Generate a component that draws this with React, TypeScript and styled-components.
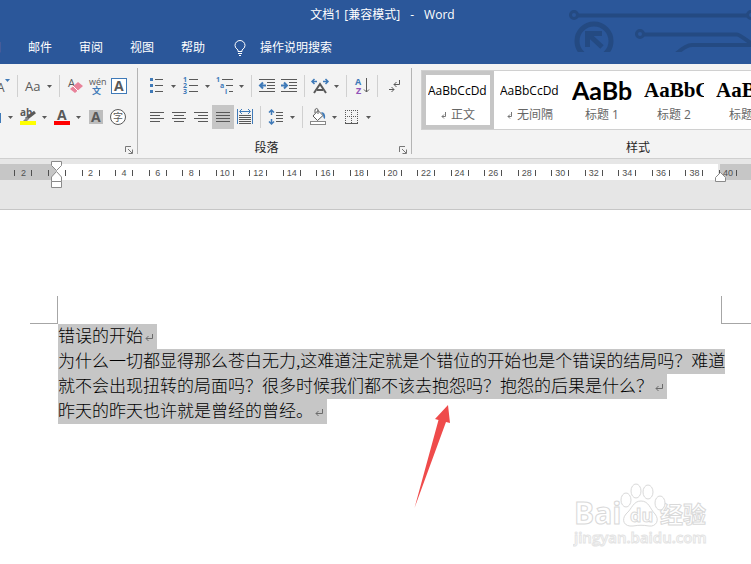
import React from "react";
import styled, { createGlobalStyle } from "styled-components";

const BLUE = "#2b579a";
const INK = "#595959";
const ACCENT = "#3f7ab8";

const Global = createGlobalStyle`
  * { box-sizing: border-box; }
  html, body, #root { height: 100%; }
  body {
    margin: 0;
    overflow: hidden;
    font: 12px/16px "Open Sans", "Noto Sans CJK SC", sans-serif;
    color: #262626;
  }
  button { font: inherit; color: inherit; background: none; border: 0; padding: 0; margin: 0; }
  svg { display: block; flex: none; }
`;

const Window = styled.div`
  display: flex;
  flex-direction: column;
  min-height: 100%;
  overflow: hidden;
  background: #fff;
`;

const Header = styled.header`
  position: relative;
  overflow: hidden;
  background: ${BLUE};
  color: #fff;
  height: 64px;
`;

const Circuit = styled.svg`
  position: absolute;
  top: 0;
  right: 0;
`;

const TitleBar = styled.div`
  position: relative;
  display: flex;
  justify-content: center;
  gap: 10px;
  height: 30px;
  padding-left: 14px;
  line-height: 30px;
`;

const Tabs = styled.nav`
  position: relative;
  display: flex;
  align-items: center;
  gap: 27px;
  height: 36px;
  margin-left: -23px;
`;

const Tab = styled.button`
  line-height: 36px;
  white-space: nowrap;
`;

const SearchTab = styled(Tab)`
  display: flex;
  align-items: center;
  gap: 12px;
`;

const Ribbon = styled.div`
  display: flex;
  flex: none;
  height: 95px;
  overflow: hidden;
  background: #f3f3f3;
  border-bottom: 1px solid #cfcfcf;
`;

const Group = styled.section<{ $w: number }>`
  display: flex;
  flex: none;
  flex-direction: column;
  width: ${(p) => p.$w}px;
`;

const GroupLine = styled.div`
  flex: none;
  width: 1px;
  margin: 4px 0;
  background: #b4b4b4;
`;

const Rows = styled.div<{ $indent?: number }>`
  display: flex;
  flex-direction: column;
  gap: 7px;
  height: 74px;
  padding: 10px 0 0 ${(p) => p.$indent ?? 0}px;
`;

const Row = styled.div`
  display: flex;
  height: 24px;
`;

const Tool = styled.button<{ $w?: number; $on?: boolean }>`
  display: flex;
  flex: none;
  justify-content: flex-start;
  width: ${(p) => p.$w ?? 22}px;
  height: 24px;
  background: ${(p) => (p.$on ? "#c6c6c6" : "transparent")};
`;

const CaretButton = styled.button`
  display: flex;
  flex: none;
  align-items: center;
  width: 12px;
  height: 24px;
  padding-left: 3px;
`;

const Split = styled.div`
  flex: none;
  width: 1px;
  height: 22px;
  margin: 1px 4px 0 3px;
  background: #d0d0d0;
`;

const GroupFoot = styled.div`
  display: flex;
  align-items: center;
  height: 20px;
`;

const GroupName = styled.span`
  flex: 1;
  text-align: center;
`;

const Launcher = styled.button`
  display: flex;
  align-items: center;
  justify-content: center;
  width: 16px;
  height: 16px;
  padding-top: 4px;
`;

const Gallery = styled.div`
  display: flex;
  height: 60px;
  margin: 6px 0 8px 9px;
  border: 1px solid #d0d0d0;
  background: #fff;
`;

const StyleCard = styled.button<{ $on?: boolean }>`
  display: flex;
  flex: none;
  flex-direction: column;
  width: 72px;
  padding: ${(p) => (p.$on ? "0 2px" : "4px 6px")};
  border: ${(p) => (p.$on ? "4px solid #c6c6c6" : "0")};
`;

const Sample = styled.span<{ $font: string; $size: number; $bold?: boolean }>`
  width: 60px;
  height: 31px;
  overflow: hidden;
  color: #000;
  font-family: ${(p) => p.$font}, sans-serif;
  font-size: ${(p) => p.$size}px;
  font-weight: ${(p) => (p.$bold ? 700 : 400)};
  line-height: 31px;
  text-align: left;
  white-space: nowrap;
`;

const StyleName = styled.span`
  display: flex;
  align-items: center;
  justify-content: center;
  gap: 4px;
  width: 60px;
  height: 18px;
  color: #666;
  white-space: nowrap;
`;

const RulerBar = styled.div`
  flex: none;
  height: 51px;
  overflow: hidden;
  background: #e6e6e6;
  border-bottom: 1px solid #c6c6c6;
`;

const Paper = styled.main`
  position: relative;
  flex: 1;
  padding-top: 86px;
`;

const Corners = styled.div`
  display: flex;
  justify-content: space-between;
  padding-left: 30px;
`;

const Corner = styled.div<{ $side: "left" | "right" }>`
  width: ${(p) => (p.$side === "left" ? 28 : 30)}px;
  height: 28px;
  border-bottom: 1px solid #a6a6a6;
  border-left: ${(p) => (p.$side === "right" ? "1px solid #a6a6a6" : "0")};
  border-right: ${(p) => (p.$side === "left" ? "1px solid #a6a6a6" : "0")};
`;

const Body = styled.article`
  padding-left: 58px;
  color: #000;
  font: 300 17px/22px "Noto Sans CJK SC", sans-serif;
`;

const Para = styled.p`
  margin: 0;
`;

const Line = styled.span`
  display: flex;
  align-items: center;
  width: fit-content;
  height: 25px;
  padding-bottom: 3px;
  background: #c6c6c6;
  white-space: nowrap;
`;

const Pointer = styled.svg`
  position: absolute;
  left: 410px;
  top: 191px;
`;

const Watermark = styled.svg`
  position: absolute;
  right: 36px;
  bottom: 10px;
`;

const Caret = ({ label }: { label: string }) => (
  <CaretButton aria-label={label}>
    <svg width="5" height="3"><path d="M0 0H5L2.5 3Z" fill={INK} /></svg>
  </CaretButton>
);

type IconProps = { label: string; w?: number; on?: boolean; children: React.ReactNode };

const Icon = ({ label, w, on, children }: IconProps) => (
  <Tool aria-label={label} aria-pressed={on} $w={w} $on={on}>
    <svg width="22" height="24" fill="none" stroke={INK} overflow="visible">{children}</svg>
  </Tool>
);

type GlyphProps = { x: number; y: number; size: number; fill?: string; bold?: boolean; children: string };

const Glyph = ({ x, y, size, fill = INK, bold, children }: GlyphProps) => (
  <text x={x} y={y} fontSize={size} fill={fill} stroke="none" fontWeight={bold ? 700 : 400}>{children}</text>
);

const LaunchButton = ({ label }: { label: string }) => (
  <Launcher aria-label={label}>
    <svg width="8" height="8" fill="none" stroke="#777">
      <path d="M.5 6V.5H6M3 3L7 7M7.5 3.5V7.5H3.5" />
    </svg>
  </Launcher>
);

const ReturnMark = () => (
  <svg width="14" height="22" fill="none" stroke="#6b6b6b">
    <path d="M9.5 10V14.5H3M5.5 12L3 14.5L5.5 17" />
  </svg>
);

const SmallMark = () => (
  <svg width="6" height="8" fill="none" stroke="#777">
    <path d="M4.5 1V5.5H1M3 3.5L1 5.5L3 7.5" />
  </svg>
);

const SAMPLES = [
  { name: "正文", text: "AaBbCcDd", font: '"Open Sans"', size: 12, mark: true },
  { name: "无间隔", text: "AaBbCcDd", font: '"Open Sans"', size: 12, mark: true },
  { name: "标题 1", text: "AaBb", font: "Lato", size: 25, bold: true },
  { name: "标题 2", text: "AaBbC", font: '"Liberation Serif"', size: 21, bold: true },
  { name: "标题 3", text: "AaBbC", font: '"Liberation Serif"', size: 21, bold: true },
];

const ORIGIN = 57;
const STEP = 671 / 20;
const MARKS = Array.from({ length: 22 }, (_, i) => i - 1);

const Ruler = () => (
  <RulerBar>
    <svg width="100%" height="50">
      <rect x="0" y="5" width="56" height="16" fill="#c6c6c6" />
      <rect x="56" y="5" width="662" height="16" fill="#fff" />
      <rect x="720" y="5" width="100%" height="16" fill="#c6c6c6" />
      {MARKS.map((n) => {
        const c = ORIGIN + n * STEP;
        return (
          <g key={n} fill="#505050">
            <rect x={Math.round(c - 9)} y="11" width="1" height="6" />
            <rect x={Math.round(c + 8)} y="11" width="1" height="6" />
            {n !== 0 && (
              <text x={c} y="17" fontSize="9" textAnchor="middle" fontFamily="Liberation Sans, sans-serif">
                {Math.abs(n * 2)}
              </text>
            )}
          </g>
        );
      })}
      <g fill="#fff" stroke="#8a8a8a">
        <path d="M51.5 2.5H61.5V6.5L56.5 11.5L51.5 6.5Z" />
        <path d="M56.5 12.5L61.5 18V22.5H51.5V18Z" />
        <path d="M51.5 22.5H61.5V28.5H51.5Z" />
        <path d="M720.5 13.5L725.5 18.5V22.5H715.5V18.5Z" />
      </g>
    </svg>
  </RulerBar>
);

export default function App() {
  return (
    <Window>
      <Global />
      <Header>
        <Circuit width="187" height="52" fill="none" stroke="#244a82" aria-hidden="true">
          <g strokeWidth="3">
            <circle cx="10" cy="15" r="3.5" />
            <circle cx="187" cy="15" r="3.5" />
            <circle cx="76" cy="34" r="3.5" />
          </g>
          <g strokeWidth="4">
            <path d="M14 15.5H183" />
            <path d="M80 34.5H173Q175 34.5 188 44" />
            <path d="M112 54Q122 45 128 45H188" />
          </g>
          <circle cx="30" cy="41" r="17" strokeWidth="5" />
          <path d="M38 33.5H23.5V47M24 34L38 47" strokeWidth="5" />
        </Circuit>
        <TitleBar>
          <span>文档1 [兼容模式]</span>
          <span>-</span>
          <span>Word</span>
        </TitleBar>
        <Tabs>
          {["引用", "邮件", "审阅", "视图", "帮助"].map((t) => <Tab key={t}>{t}</Tab>)}
          <SearchTab>
            <svg width="16" height="18" fill="none" stroke="#fff">
              <path d="M6 12.5V11Q3 9 3 6.5A5 5 0 0 1 13 6.5Q13 9 10 11V12.5ZM6 14.5H10M7 16.5H9" />
            </svg>
            操作说明搜索
          </SearchTab>
        </Tabs>
      </Header>

      <Ribbon>
        <Group $w={137} aria-label="字体">
          <Rows>
            <Row>
              <Icon label="缩小字号" w={14}>
                <Glyph x={-3} y={18} size={12}>A</Glyph>
                <path d="M5 5H10L7.5 8Z" fill={ACCENT} stroke="none" />
              </Icon>
              <Split />
              <Icon label="更改大小写"><Glyph x={3} y={17} size={13}>Aa</Glyph></Icon>
              <Caret label="大小写选项" />
              <Split />
              <Icon label="清除格式">
                <Glyph x={4} y={13} size={11}>A</Glyph>
                <path d="M6 15L14 8L19 12L11 19Z" fill="#e8829a" stroke="none" />
                <path d="M9 12L14 17" stroke="#fff" />
              </Icon>
              <Icon label="拼音指南">
                <Glyph x={3} y={11} size={9}>wén</Glyph>
                <Glyph x={6} y={20} size={9} fill={ACCENT} bold>文</Glyph>
              </Icon>
              <Icon label="字符边框">
                <rect x="3.5" y="4.5" width="15" height="15" fill="#fff" stroke={ACCENT} />
                <Glyph x={6} y={17} size={14} bold>A</Glyph>
              </Icon>
            </Row>
            <Row>
              <Icon label="文本效果" w={5}><path d="M0 8V18" stroke={ACCENT} strokeWidth="2" /></Icon>
              <Caret label="文本效果选项" />
              <Icon label="突出显示">
                <Glyph x={3} y={11} size={10} bold>ab</Glyph>
                <path d="M18 7L9 14" strokeWidth="3" />
                <path d="M10 12L6 16H10L12 14Z" fill="#888" stroke="none" />
                <rect x="3" y="16" width="16" height="4" fill="#ff0" stroke="none" />
              </Icon>
              <Caret label="突出显示颜色" />
              <Icon label="字体颜色">
                <Glyph x={6} y={15} size={14} bold>A</Glyph>
                <rect x="3" y="16" width="16" height="4" fill="#f00" stroke="none" />
              </Icon>
              <Caret label="字体颜色选项" />
              <Icon label="字符底纹">
                <rect x="4" y="5" width="14" height="14" fill="#bdbdbd" stroke="none" />
                <Glyph x={6} y={17} size={14} bold>A</Glyph>
              </Icon>
              <Icon label="带圈字符">
                <circle cx="11" cy="12" r="7.5" fill="#fff" />
                <Glyph x={6} y={16} size={10}>字</Glyph>
              </Icon>
            </Row>
          </Rows>
          <GroupFoot>
            <GroupName />
            <LaunchButton label="字体设置" />
          </GroupFoot>
        </Group>
        <GroupLine />

        <Group $w={273} aria-label="段落">
          <Rows $indent={8}>
            <Row>
              <Icon label="项目符号">
                <path d="M4 5.5H7M4 11.5H7M4 17.5H7" stroke={ACCENT} strokeWidth="3" />
                <path d="M9 5.5H17M9 11.5H17M9 17.5H17" />
              </Icon>
              <Caret label="项目符号选项" />
              <Icon label="编号">
                <Glyph x={3} y={8} size={7} fill={ACCENT} bold>1</Glyph>
                <Glyph x={3} y={14} size={7} fill={ACCENT} bold>2</Glyph>
                <Glyph x={3} y={20} size={7} fill={ACCENT} bold>3</Glyph>
                <path d="M9 5.5H18M9 11.5H18M9 17.5H18" />
              </Icon>
              <Caret label="编号选项" />
              <Icon label="多级列表">
                <Glyph x={2} y={8} size={7} fill={ACCENT} bold>1</Glyph>
                <Glyph x={6} y={14} size={7} fill={ACCENT} bold>a</Glyph>
                <Glyph x={11} y={20} size={7} fill={ACCENT} bold>i</Glyph>
                <path d="M8 5.5H19M12 11.5H19M15 17.5H19" />
              </Icon>
              <Caret label="多级列表选项" />
              <Split />
              <Icon label="减少缩进量">
                <path d="M3 5.5H19M11 8.5H19M11 11.5H19M11 14.5H19M3 17.5H19" />
                <path d="M10 11.5H4M7 8.5L4 11.5L7 14.5" stroke={ACCENT} strokeWidth="2" />
              </Icon>
              <Icon label="增加缩进量" w={23}>
                <path d="M3 5.5H19M11 8.5H19M11 11.5H19M11 14.5H19M3 17.5H19" />
                <path d="M3 11.5H9M6 8.5L9 11.5L6 14.5" stroke={ACCENT} strokeWidth="2" />
              </Icon>
              <Split />
              <Icon label="中文版式">
                <path d="M5 19L11 10L17 19M8 16H14" strokeWidth="2" />
                <path d="M8 7.5H3M5.5 5L3 7.5L5.500 10M14 7.5H19M16.5 5L19 7.5L16.5 10" stroke={ACCENT} strokeWidth="1.5" />
              </Icon>
              <Caret label="中文版式选项" />
              <Split />
              <Icon label="排序" w={23}>
                <Glyph x={4} y={11} size={9} fill={ACCENT} bold>A</Glyph>
                <Glyph x={5} y={20} size={9} fill="#9253b8" bold>Z</Glyph>
                <path d="M15.5 4V18M13 15.5L15.5 18L18 15.5" />
              </Icon>
              <Split />
              <Icon label="显示编辑标记">
                <path d="M17.5 6V10.5H12M14.5 8L12 10.5L14.5 13M7 15.5H12M9.5 13L12 15.5L9.5 18" />
              </Icon>
            </Row>
            <Row>
              <Icon label="左对齐"><path d="M4 7.5H18M4 10.5H14M4 13.5H18M4 16.5H14" /></Icon>
              <Icon label="居中"><path d="M4 7.5H18M6 10.5H16M4 13.5H18M6 16.5H16" /></Icon>
              <Icon label="右对齐"><path d="M4 7.5H18M8 10.5H18M4 13.5H18M8 16.5H18" /></Icon>
              <Icon label="两端对齐" on><path d="M4 7.5H18M4 10.5H18M4 13.5H18M4 16.5H18" /></Icon>
              <Icon label="分散对齐" w={23}>
                <path d="M3.5 4V19M18.5 4V19M6 6.5H16M8 4L5.5 6.5L8 9M14 4L16.5 6.5L14 9" stroke={ACCENT} />
                <path d="M5 10.5H17M5 12.5H17M5 14.5H17M5 16.5H17M5 18.5H17" />
              </Icon>
              <Split />
              <Icon label="行距">
                <path d="M6.5 5V10M4 7.5L6.5 5L9 7.5M6.5 14V19M4 16.5L6.5 19L9 16.5" stroke={ACCENT} strokeWidth="1.5" />
                <path d="M11 7.5H18M11 10.5H18M11 13.5H18M11 16.5H18" />
              </Icon>
              <Caret label="行距选项" />
              <Split />
              <Icon label="底纹">
                <path d="M6 11L11 5.5L16 10.5L10.5 15.5ZM8 8V4.5Q10 2.5 11 4.5V9" fill="#fff" />
                <path d="M14 7Q19 7 18 14Q16 13 16 10Z" fill={ACCENT} stroke="none" />
                <rect x="3.5" y="16.5" width="15" height="3" fill="#fff" stroke="#888" />
              </Icon>
              <Caret label="底纹颜色" />
              <Icon label="边框">
                <path d="M4 5.5H17M4 11.5H17M4.5 5V18M10.5 5V18M16.5 5V18" strokeDasharray="1 1" />
                <path d="M4 18.5H17" />
              </Icon>
              <Caret label="边框选项" />
            </Row>
          </Rows>
          <GroupFoot>
            <GroupName>段落</GroupName>
            <LaunchButton label="段落设置" />
          </GroupFoot>
        </Group>
        <GroupLine />

        <Group $w={452} aria-label="样式">
          <Gallery>
            {SAMPLES.map((s, i) => (
              <StyleCard key={s.name} $on={i === 0}>
                <Sample $font={s.font} $size={s.size} $bold={s.bold}>{s.text}</Sample>
                <StyleName>{s.mark && <SmallMark />}{s.name}</StyleName>
              </StyleCard>
            ))}
          </Gallery>
          <GroupFoot><GroupName>样式</GroupName></GroupFoot>
        </Group>
      </Ribbon>

      <Ruler />

      <Paper>
        <Corners>
          <Corner $side="left" />
          <Corner $side="right" />
        </Corners>
        <Body>
          <Para><Line>错误的开始<ReturnMark /></Line></Para>
          <Para>
            <Line>为什么一切都显得那么苍白无力,这难道注定就是个错位的开始也是个错误的结局吗？难道</Line>
            <Line>就不会出现扭转的局面吗？很多时候我们都不该去抱怨吗？抱怨的后果是什么？<ReturnMark /></Line>
          </Para>
          <Para><Line>昨天的昨天也许就是曾经的曾经。<ReturnMark /></Line></Para>
        </Body>
        <Pointer width="44" height="108" aria-hidden="true">
          <path d="M38 4L40 22L36 21L4.5 107L28.5 19L25 18Z" fill="#ef4b4b" />
        </Pointer>
        <Watermark width="142" height="74" fill="#fff" stroke="#d9d9d9" fontFamily="Open Sans, Noto Sans CJK SC, sans-serif" fontWeight="700">
          <text x="1" y="44" fontSize="30">Bai</text>
          <text x="87" y="43" fontSize="23">经验</text>
          <ellipse cx="53" cy="20" rx="5" ry="7" />
          <ellipse cx="63" cy="11" rx="5" ry="7" />
          <ellipse cx="75" cy="12" rx="5" ry="7" />
          <ellipse cx="87" cy="23" rx="5" ry="7" />
          <path d="M68 21C76 21 77 29 82 34C87 40 83 47 76 46C70 45 66 45 60 46C51 47 48 40 53 34C59 29 60 21 68 21Z" />
          <text x="57" y="42" fontSize="18">du</text>
          <text x="1" y="63" fontSize="15" fontWeight="600" stroke="#e4e4e4">jingyan.baidu.com</text>
        </Watermark>
      </Paper>
    </Window>
  );
}
